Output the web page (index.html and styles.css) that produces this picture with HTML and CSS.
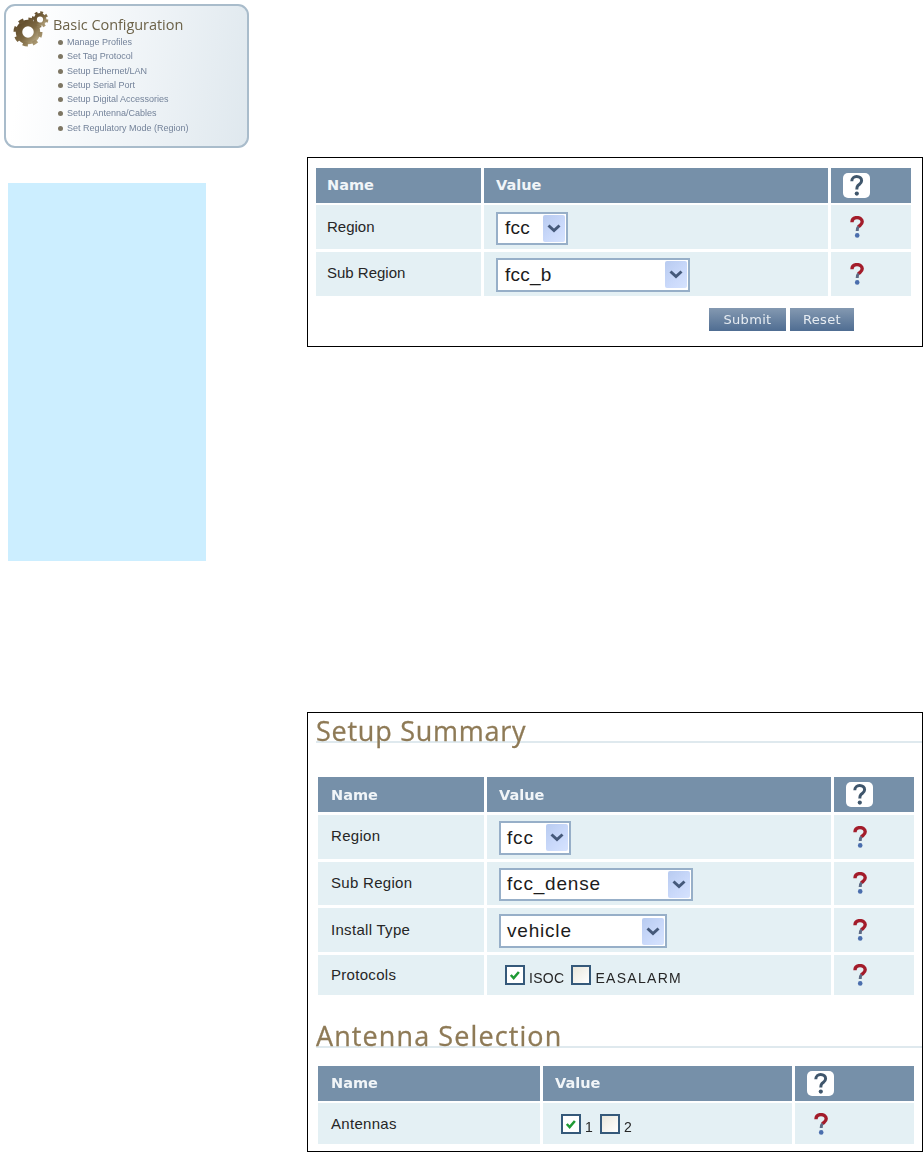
FILE: index.html
```html
<!DOCTYPE html>
<html lang="en">
<head>
<meta charset="utf-8">
<title>Setup Summary</title>
<link rel="stylesheet" href="styles.css">
</head>
<body>
<svg class="defs" width="0" height="0" aria-hidden="true">
  <defs>
    <linearGradient id="gearFill" x1="0" y1="0" x2="1" y2="1">
      <stop offset="0" stop-color="#5f4a2a"/>
      <stop offset="0.55" stop-color="#7d6842"/>
      <stop offset="1" stop-color="#b9a983"/>
    </linearGradient>
    <symbol id="q-red" viewBox="0 0 14 22">
      <path d="M2 6.2C2 3 4.2 1.6 7 1.6c3 0 5.2 1.7 5.2 4.2 0 2.8-2.4 3.4-3.8 5" fill="none" stroke="#a31c2a" stroke-width="3.4"/>
      <path d="M8.4 10.6C7.4 11.8 7.2 12.8 7.2 15" fill="none" stroke="#5d6a84" stroke-width="3"/>
      <circle cx="7.2" cy="19.4" r="2.3" fill="#4a6ead"/>
    </symbol>
    <symbol id="q-white" viewBox="0 0 27 25">
      <rect width="27" height="25" rx="5" fill="#fff"/>
      <path d="M8.8 8.2C8.8 5.2 11 3.6 13.6 3.6c3 0 5 1.7 5 4.2 0 2.8-2.4 3.4-3.8 5-.8 1-1 1.8-1 3.6" fill="none" stroke="#3f566c" stroke-width="3"/>
      <circle cx="13.8" cy="20.6" r="2.1" fill="#3f566c"/>
    </symbol>
    <symbol id="chev" viewBox="0 0 22 27">
      <path d="M5.5 10.5l5.5 5 5.5-5" fill="none" stroke="#45597a" stroke-width="3"/>
    </symbol>
    <symbol id="tick" viewBox="0 0 19 19">
      <path d="M4.5 9.5l3.4 3.6 6.2-7.2" fill="none" stroke="#1f9a34" stroke-width="3"/>
    </symbol>
  </defs>
</svg>

<div class="page">
  <aside class="side">
    <nav class="card">
      <svg class="gear" viewBox="0 0 36 36" width="36" height="36" aria-hidden="true">
        <g fill="none" stroke="url(#gearFill)">
          <circle cx="15" cy="21" r="9" stroke-width="6.5"/>
          <circle cx="15" cy="21" r="12.5" stroke-width="4" stroke-dasharray="5 4.82"/>
          <circle cx="27" cy="8.5" r="4.8" stroke-width="3.4"/>
          <circle cx="27" cy="8.5" r="7" stroke-width="2.6" stroke-dasharray="2.8 2.7"/>
        </g>
      </svg>
      <div class="card-body">
        <h2 class="card-title">Basic Configuration</h2>
        <ul class="links">
          <li>Manage Profiles</li>
          <li>Set Tag Protocol</li>
          <li>Setup Ethernet/LAN</li>
          <li>Setup Serial Port</li>
          <li>Setup Digital Accessories</li>
          <li>Setup Antenna/Cables</li>
          <li>Set Regulatory Mode (Region)</li>
        </ul>
      </div>
    </nav>
    <div class="blue-box"></div>
  </aside>

  <main class="main">
    <section class="panel panel-region">
      <div class="inner">
        <div class="grid grid-region">
          <div class="head pad-a">Name</div>
          <div class="head pad-b">Value</div>
          <div class="head pad-h"><svg class="q-head"><use href="#q-white"/></svg></div>

          <div class="cell pad-a row-44">Region</div>
          <div class="cell pad-b"><div class="select w-72"><span class="select-text">fcc</span><span class="select-btn"><svg class="chev"><use href="#chev"/></svg></span></div></div>
          <div class="cell pad-q"><svg class="q"><use href="#q-red"/></svg></div>

          <div class="cell pad-a row-44">Sub Region</div>
          <div class="cell pad-b"><div class="select w-194"><span class="select-text">fcc_b</span><span class="select-btn"><svg class="chev"><use href="#chev"/></svg></span></div></div>
          <div class="cell pad-q"><svg class="q"><use href="#q-red"/></svg></div>
        </div>
        <div class="actions">
          <button class="btn btn-submit" type="button">Submit</button>
          <button class="btn btn-reset" type="button">Reset</button>
        </div>
      </div>
    </section>

    <section class="panel panel-summary">
      <div class="inner">
        <h1 class="heading">Setup Summary</h1>
        <div class="grid grid-summary wide">
          <div class="head pad-c">Name</div>
          <div class="head pad-b">Value</div>
          <div class="head pad-h"><svg class="q-head"><use href="#q-white"/></svg></div>

          <div class="cell pad-c row-44">Region</div>
          <div class="cell pad-b"><div class="select w-72"><span class="select-text">fcc</span><span class="select-btn"><svg class="chev"><use href="#chev"/></svg></span></div></div>
          <div class="cell pad-q"><svg class="q"><use href="#q-red"/></svg></div>

          <div class="cell pad-c row-44">Sub Region</div>
          <div class="cell pad-b"><div class="select w-194"><span class="select-text">fcc_dense</span><span class="select-btn"><svg class="chev"><use href="#chev"/></svg></span></div></div>
          <div class="cell pad-q"><svg class="q"><use href="#q-red"/></svg></div>

          <div class="cell pad-c row-44">Install Type</div>
          <div class="cell pad-b"><div class="select w-168"><span class="select-text">vehicle</span><span class="select-btn"><svg class="chev"><use href="#chev"/></svg></span></div></div>
          <div class="cell pad-q"><svg class="q"><use href="#q-red"/></svg></div>

          <div class="cell pad-c row-40">Protocols</div>
          <div class="cell pad-k">
            <span class="check on"><svg class="tick"><use href="#tick"/></svg></span><span class="check-label">ISOC</span>
            <span class="check"></span><span class="check-label label-wide">EASALARM</span>
          </div>
          <div class="cell pad-q"><svg class="q"><use href="#q-red"/></svg></div>
        </div>

        <h1 class="heading heading-second">Antenna Selection</h1>
        <div class="grid grid-antenna wide">
          <div class="head pad-c">Name</div>
          <div class="head pad-b">Value</div>
          <div class="head pad-h"><svg class="q-head"><use href="#q-white"/></svg></div>

          <div class="cell pad-c row-41">Antennas</div>
          <div class="cell pad-k">
            <span class="check on"><svg class="tick"><use href="#tick"/></svg></span><span class="check-label">1</span>
            <span class="check"></span><span class="check-label">2</span>
          </div>
          <div class="cell pad-q"><svg class="q"><use href="#q-red"/></svg></div>
        </div>
      </div>
    </section>
  </main>
</div>
</body>
</html>
```

FILE: styles.css
```css
* { box-sizing: border-box; }
html, body { margin: 0; padding: 0; background: #fff; }
body { font-family: "Liberation Sans", Arial, sans-serif; color: #222; }
.defs { position: absolute; }

.page { display: grid; grid-template-columns: 307px 616px; height: 1152px; overflow: hidden; }

/* Left column */
.side { padding: 4px 0 0 4px; }
.card {
  display: grid; grid-template-columns: 47px 1fr;
  width: 245px; height: 144px;
  border: 2px solid #a9bccb; border-radius: 11px;
  background: linear-gradient(100deg, #fff 10%, #f1f5f8 50%, #dfe8ee 100%);
  filter: blur(0.45px);
}
.gear { margin: 5px 0 0 7px; }
.card-title {
  margin: 11px 0 0; font: 400 14.5px/16px "Open Sans", sans-serif;
  letter-spacing: -.05px; color: #6c6248;
}
.links { list-style: none; margin: 2px 0 0 14px; padding: 0; }
.links li {
  position: relative; height: 14.3px; line-height: 14.3px;
  font-size: 9px; letter-spacing: 0; color: #74839a; white-space: nowrap;
}
.links li::before {
  content: ""; position: absolute; left: -9px; top: 5px;
  width: 5px; height: 5px; border-radius: 50%; background: #7d7663;
}
.blue-box { width: 198px; height: 378px; margin: 35px 0 0 4px; background: #cceeff; }

/* Panels */
.panel { width: 616px; border: 1px solid #000; background: #fff; }
.panel-region { height: 190px; margin-top: 157px; }
.panel-summary { height: 440px; margin-top: 365px; }
.inner { filter: blur(0.4px); }
.panel-region .inner { padding: 10px 11px 0 8px; }
.panel-summary .inner { padding-left: 8px; }

.heading {
  margin: 0; padding-top: 8px; height: 30px;
  font: 400 27px/20px "Open Sans", sans-serif; letter-spacing: .75px;
  -webkit-text-stroke: .3px #8e7a56;
  color: #8e7a56; border-bottom: 2px solid #dfe9ee;
}
.heading-second { margin-top: 23px; letter-spacing: 1.1px; }

.grid { display: grid; gap: 3px; }
.grid-region { grid-template-columns: 165px 344px 80px; width: 595px; row-gap: 2.67px; }
.wide { width: 596px; margin-left: 2px; }
.grid-summary { grid-template-columns: 166px 344px 80px; margin-top: 34px; }
.grid-antenna { grid-template-columns: 222px 249px 119px; margin-top: 18px; row-gap: 2.67px; }

.head {
  display: flex; align-items: center; height: 35px;
  background: #7690a9; color: #f1f5f8;
  font: 700 14.5px "DejaVu Sans", sans-serif;
}
.grid-region .head, .grid-antenna .head { height: 34.67px; }
.cell {
  display: flex; align-items: center;
  background: #e4f0f4; font-size: 15px; color: #262626;
}
.panel-summary .cell { letter-spacing: .3px; }
.row-44 { height: 43.67px; padding-bottom: 2px; }
.grid-region .row-44 { height: 44px; }
.row-40 { height: 40px; padding-bottom: 1px; }
.row-41 { height: 41px; padding-bottom: 1px; }
.pad-a { padding-left: 11px; }
.pad-b { padding-left: 12px; }
.pad-c { padding-left: 13px; }
.pad-h { padding-left: 12px; }
.pad-q { padding-left: 18.5px; }
.pad-k { padding-left: 18px; }

.q-head { width: 27px; height: 25px; }
.q { width: 14px; height: 22px; }

.select {
  display: flex; align-items: center; justify-content: space-between;
  height: 33.5px; margin-top: 2px; padding: 0 1px 0 6px;
  border: 2px solid #97afc8; background: #fff;
}
.w-72 { width: 72px; }
.w-168 { width: 168px; }
.w-194 { width: 194px; }
.select-text { font-size: 19px; letter-spacing: .8px; color: #1c1c1c; }
.panel-region .select-text { letter-spacing: .2px; margin-left: 1px; }
.select-btn {
  display: flex; width: 22px; height: 27px; border-radius: 2px;
  background: linear-gradient(135deg, #b8cbf0, #cbdafb 60%, #d6e3fe);
}
.chev { width: 22px; height: 27px; }

.check {
  display: inline-block; width: 20px; height: 20px; margin-top: 1px;
  border: 2px solid #35597a; background: linear-gradient(135deg, #e9e7dc, #fff);
}
.check.on { background: #fff; }
.tick { display: block; width: 16px; height: 16px; }
.check-label { margin: 7px 7px 0 4px; font-size: 14px; letter-spacing: .3px; }
.label-wide { letter-spacing: 1.3px; }

.actions { display: flex; justify-content: flex-end; gap: 4px; margin: 12px 57px 0 0; }
.btn {
  height: 23px; padding: 0; border: 0;
  background: linear-gradient(#8499b1, #4f6d92);
  font: 400 13px "DejaVu Sans", sans-serif; color: #e6ecf2; letter-spacing: .3px;
}
.btn-submit { width: 77px; }
.btn-reset { width: 64px; }
```
